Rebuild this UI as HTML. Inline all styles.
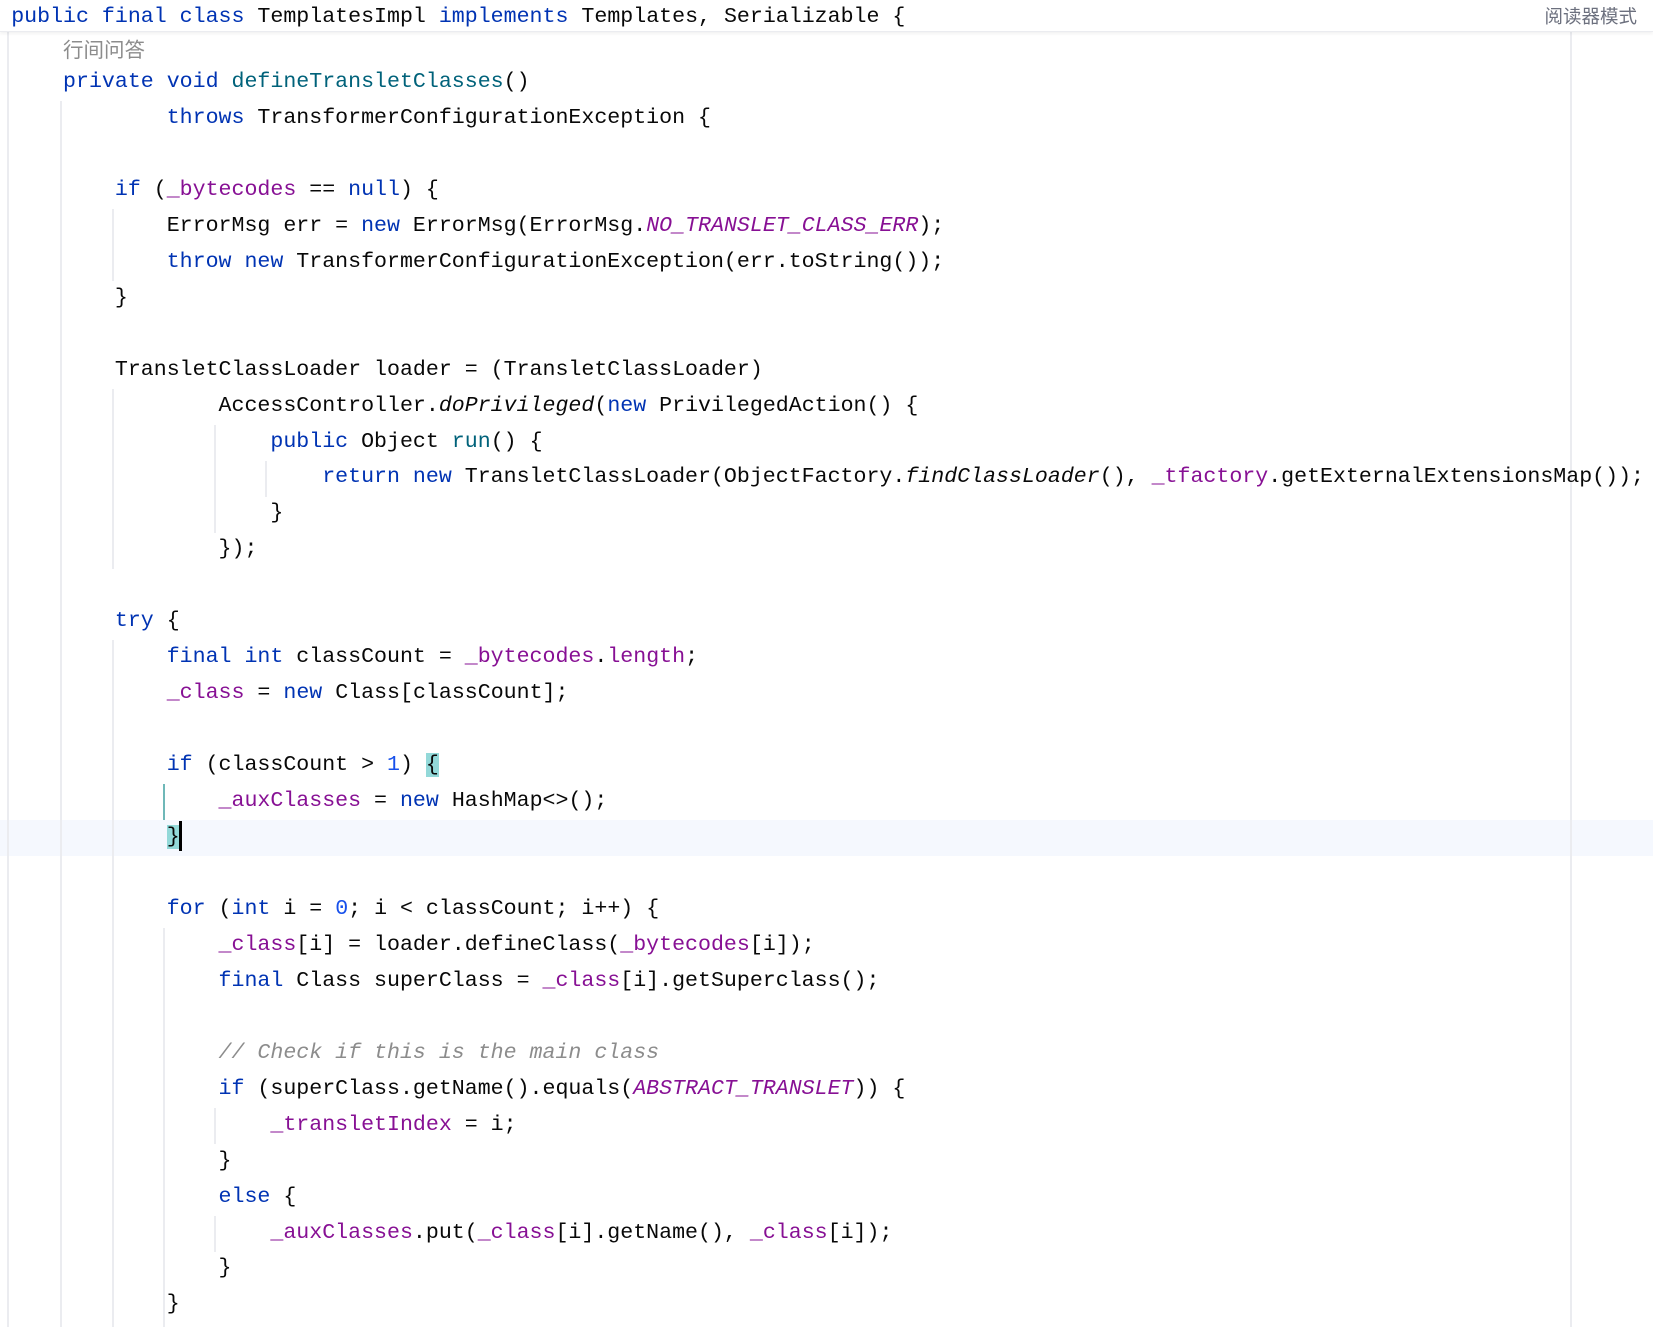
<!DOCTYPE html>
<html><head><meta charset="utf-8"><style>
html,body{margin:0;padding:0;background:#fff;width:1653px;height:1327px;overflow:hidden;position:relative}
.m{font-family:"Liberation Mono",monospace;font-size:21.6px;color:#080808}
#hdr{position:absolute;left:0;top:0;width:1653px;height:31px;border-bottom:1px solid #EBECF0;box-shadow:0 2px 3px rgba(0,0,0,0.05);background:#fff;z-index:3}
#hdr .m{position:absolute;left:11.2px;top:2px;line-height:31px;white-space:pre}
#rm{position:absolute;right:16px;top:5px;font-family:"Liberation Sans","Noto Sans CJK SC",sans-serif;font-size:18.5px;color:#6C707E;line-height:24px}
#cmt{position:absolute;left:63px;top:38px;font-family:"Liberation Sans","Noto Sans CJK SC",sans-serif;font-size:20.5px;color:#8C8C8C;line-height:26px}
#code{position:absolute;left:11.2px;top:65px;z-index:2}
#code div{height:35.96px;line-height:35.96px;white-space:pre}
.k{color:#0033B3}.f{color:#00627A}.p{color:#871094}.n{color:#1750EB}.c{color:#8C8C8C;font-style:italic}.i{font-style:italic}.pi{color:#871094;font-style:italic}
.g{position:absolute;width:2px;background:#EBECF0;z-index:1}
.b{background:#93D9D9}
</style></head><body>
<div id="hdr"><div class="m"><span class="k">public final class</span> TemplatesImpl <span class="k">implements</span> Templates, Serializable {</div><div id="rm">阅读器模式</div></div>
<div class="g" style="left:1570px;top:32px;height:1295px"></div>
<div style="position:absolute;left:0;top:820px;width:1653px;height:36px;background:#F5F8FE"></div>
<div class="g" style="left:7px;top:32px;height:1295px"></div>
<div class="g" style="left:60px;top:101px;height:1226px"></div>
<div class="g" style="left:112px;top:209px;height:72px"></div>
<div class="g" style="left:112px;top:389px;height:180px"></div>
<div class="g" style="left:112px;top:640px;height:687px"></div>
<div class="g" style="left:163px;top:784px;height:36px;background:#6FB8B8"></div>
<div class="g" style="left:163px;top:928px;height:399px"></div>
<div class="g" style="left:214px;top:425px;height:108px"></div>
<div class="g" style="left:214px;top:1108px;height:36px"></div>
<div class="g" style="left:214px;top:1216px;height:36px"></div>
<div class="g" style="left:265px;top:461px;height:36px"></div>
<div id="cmt">行间问答</div>
<div id="code" class="m">
<div>    <span class="k">private void</span> <span class="f">defineTransletClasses</span>()</div>
<div>            <span class="k">throws</span> TransformerConfigurationException {</div>
<div> </div>
<div>        <span class="k">if</span> (<span class="p">_bytecodes</span> == <span class="k">null</span>) {</div>
<div>            ErrorMsg err = <span class="k">new</span> ErrorMsg(ErrorMsg.<span class="pi">NO_TRANSLET_CLASS_ERR</span>);</div>
<div>            <span class="k">throw new</span> TransformerConfigurationException(err.toString());</div>
<div>        }</div>
<div> </div>
<div>        TransletClassLoader loader = (TransletClassLoader)</div>
<div>                AccessController.<span class="i">doPrivileged</span>(<span class="k">new</span> PrivilegedAction() {</div>
<div>                    <span class="k">public</span> Object <span class="f">run</span>() {</div>
<div>                        <span class="k">return new</span> TransletClassLoader(ObjectFactory.<span class="i">findClassLoader</span>(), <span class="p">_tfactory</span>.getExternalExtensionsMap());</div>
<div>                    }</div>
<div>                });</div>
<div> </div>
<div>        <span class="k">try</span> {</div>
<div>            <span class="k">final int</span> classCount = <span class="p">_bytecodes</span>.<span class="p">length</span>;</div>
<div>            <span class="p">_class</span> = <span class="k">new</span> Class[classCount];</div>
<div> </div>
<div>            <span class="k">if</span> (classCount &gt; <span class="n">1</span>) <span class="b">{</span></div>
<div>                <span class="p">_auxClasses</span> = <span class="k">new</span> HashMap&lt;&gt;();</div>
<div>            <span class="b">}</span><span style="display:inline-block;width:3px;height:30px;background:#000;vertical-align:middle;margin-left:-1px"></span></div>
<div> </div>
<div>            <span class="k">for</span> (<span class="k">int</span> i = <span class="n">0</span>; i &lt; classCount; i++) {</div>
<div>                <span class="p">_class</span>[i] = loader.defineClass(<span class="p">_bytecodes</span>[i]);</div>
<div>                <span class="k">final</span> Class superClass = <span class="p">_class</span>[i].getSuperclass();</div>
<div> </div>
<div>                <span class="c">// Check if this is the main class</span></div>
<div>                <span class="k">if</span> (superClass.getName().equals(<span class="pi">ABSTRACT_TRANSLET</span>)) {</div>
<div>                    <span class="p">_transletIndex</span> = i;</div>
<div>                }</div>
<div>                <span class="k">else</span> {</div>
<div>                    <span class="p">_auxClasses</span>.put(<span class="p">_class</span>[i].getName(), <span class="p">_class</span>[i]);</div>
<div>                }</div>
<div>            }</div>
</div>
</body></html>
